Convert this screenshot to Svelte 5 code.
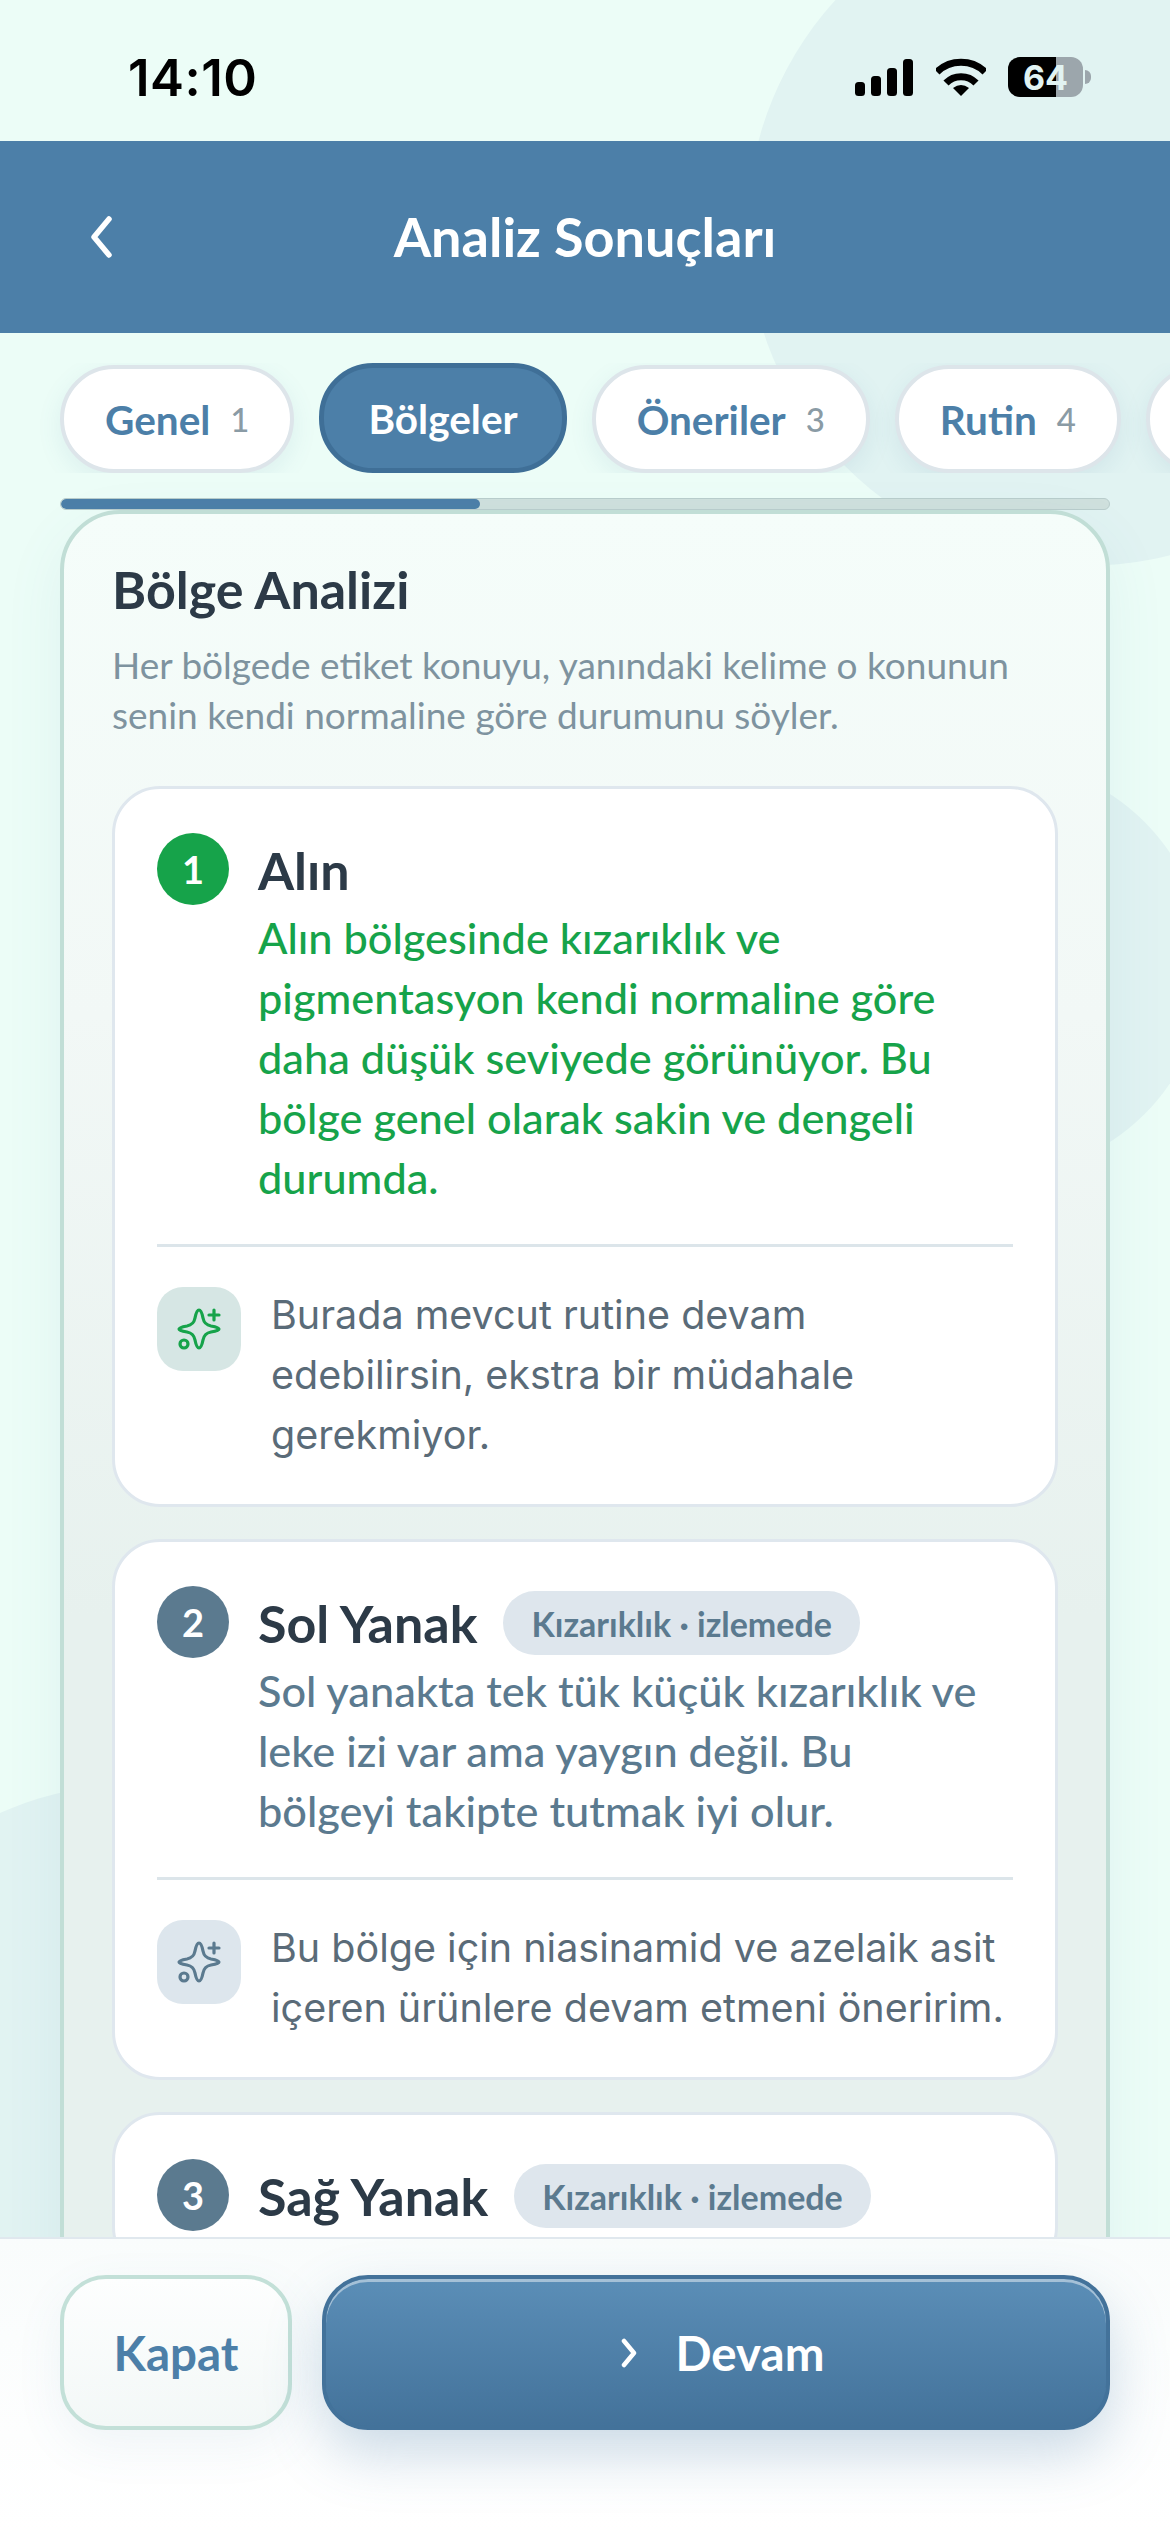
<script>
  const tabs = [
    { label: 'Genel', num: '1' },
    { label: 'Bölgeler', num: '', active: true },
    { label: 'Öneriler', num: '3' },
    { label: 'Rutin', num: '4' },
    { label: 'Ürünler', num: '5' }
  ];
  const regions = [
    {
      n: 1, name: 'Alın', tone: 'green', tag: '',
      body: 'Alın bölgesinde kızarıklık ve pigmentasyon kendi normaline göre daha düşük seviyede görünüyor. Bu bölge genel olarak sakin ve dengeli durumda.',
      advice: 'Burada mevcut rutine devam edebilirsin, ekstra bir müdahale gerekmiyor.'
    },
    {
      n: 2, name: 'Sol Yanak', tone: 'slate', tag: 'Kızarıklık · izlemede',
      body: 'Sol yanakta tek tük küçük kızarıklık ve leke izi var ama yaygın değil. Bu bölgeyi takipte tutmak iyi olur.',
      advice: 'Bu bölge için niasinamid ve azelaik asit içeren ürünlere devam etmeni öneririm.'
    },
    { n: 3, name: 'Sağ Yanak', tone: 'slate', tag: 'Kızarıklık · izlemede', body: '', advice: '' }
  ];
</script>

<div class="app">
  <div class="blob blob-a"></div>
  <div class="blob blob-b"></div>
  <div class="blob blob-c"></div>

  <div class="status">
    <span class="time">14:10</span>
    <div class="status-icons">
      <svg class="signal" width="58" height="38" viewBox="0 0 58 38" fill="#000">
        <rect x="0" y="23" width="10" height="14" rx="3.5" />
        <rect x="16" y="17" width="10" height="20" rx="3.5" />
        <rect x="32" y="9" width="10" height="28" rx="3.5" />
        <rect x="48" y="0" width="10" height="37" rx="3.5" />
      </svg>
      <svg class="wifi" width="50" height="40" viewBox="0 0 50 40" fill="none" stroke="#000" stroke-width="7">
        <path d="M1 15C14 2 36 2 49 15" />
        <path d="M10 26C18 17.500 32 17.500 40 26" />
        <path d="M17 31Q25 25 33 31L25 39Z" fill="#000" stroke="none" />
      </svg>
      <div class="battery">
        <div class="battery-body">
          <div class="battery-fill"></div>
          <span class="battery-num">64</span>
        </div>
        <div class="battery-nub"></div>
      </div>
    </div>
  </div>

  <header class="header">
    <svg class="back" width="30" height="44" viewBox="0 0 30 44" fill="none" stroke="#fff" stroke-width="5.500" stroke-linecap="round" stroke-linejoin="round">
      <path d="M24 4L9 22L24 40" />
    </svg>
    <h1>Analiz Sonuçları</h1>
  </header>

  <div class="tabs">
    {#each tabs as t}
      <div class="tab" class:active={t.active}>
        <span class="tab-label">{t.label}</span>
        {#if t.num}<span class="tab-num">{t.num}</span>{/if}
      </div>
    {/each}
  </div>

  <div class="progress"><div class="progress-fill"></div></div>

  <section class="panel">
    <h2>Bölge Analizi</h2>
    <p class="sub">Her bölgede etiket konuyu, yanındaki kelime o konunun senin kendi normaline göre durumunu söyler.</p>

    <div class="list">
      {#each regions as r}
        <article class="region {r.tone}">
          <div class="top">
            <div class="badge">{r.n}</div>
            <div class="main">
              <div class="title-row">
                <h3>{r.name}</h3>
                {#if r.tag}<span class="tag">{r.tag}</span>{/if}
              </div>
              {#if r.body}<p class="body">{r.body}</p>{/if}
            </div>
          </div>
          {#if r.advice}
            <div class="advice">
              <div class="advice-icon">
                <svg width="84" height="84" viewBox="0 0 84 84" fill="none" stroke-width="3.200" stroke-linecap="round" stroke-linejoin="round">
                  <path d="M42 23C44 23 45 26 46 31C47 36 49 38 54 39C60 40 62 41 62 42C62 43 60 44 54 45C49 46 47 48 46 53C45 58 44 61 42 61C40 61 39 58 38 53C37 48 35 46 30 45C24 44 22 43 22 42C22 41 24 40 30 39C35 38 37 36 38 31C39 26 40 23 42 23Z" />
                  <path d="M57 23V33M52 28H62" />
                  <circle cx="27" cy="57" r="4" />
                </svg>
              </div>
              <p class="advice-text">{r.advice}</p>
            </div>
          {/if}
        </article>
      {/each}
    </div>
  </section>

  <footer class="footer">
    <button class="btn-close">Kapat</button>
    <button class="btn-next">
      <svg width="18" height="30" viewBox="0 0 18 30" fill="none" stroke="#fff" stroke-width="4.500" stroke-linecap="round" stroke-linejoin="round">
        <path d="M4 3L14 15L4 27" />
      </svg>
      <span>Devam</span>
    </button>
  </footer>
</div>

<style>
  :global(body) {
    margin: 0;
    background: #ecfdf7;
  }
  .app {
    position: relative;
    width: 1170px;
    height: 2532px;
    overflow: hidden;
    background: #ecfdf7;
    font-family: Lato, "Noto Sans", sans-serif;
    color: #2c3a47;
  }
  .blob {
    position: absolute;
    border-radius: 50%;
    background: #e1f3f2;
  }
  .blob-a { left: 747px; top: -110px; width: 676px; height: 676px; }
  .blob-b { left: 791px; top: 761px; width: 414px; height: 414px; }
  .blob-c { left: -185px; top: 1785px; width: 630px; height: 630px; }

  .status {
    position: relative;
    height: 141px;
    display: flex;
    align-items: flex-start;
    justify-content: space-between;
  }
  .time {
    margin: 50px 0 0 128px;
    font-family: Inter, sans-serif;
    font-size: 51px;
    font-weight: 600;
    line-height: 56px;
    letter-spacing: 0.5px;
    color: #000;
  }
  .status-icons {
    display: flex;
    align-items: flex-start;
    margin: 57px 79px 0 0;
  }
  .signal { margin: 2px 23px 0 0; }
  .wifi { margin: 0 22px 0 0; }
  .battery {
    display: flex;
    align-items: center;
  }
  .battery-body {
    position: relative;
    width: 75px;
    height: 40px;
    border-radius: 12px;
    overflow: hidden;
    background: #9ca6ac;
    display: flex;
    align-items: center;
    justify-content: center;
  }
  .battery-fill {
    position: absolute;
    inset: 0 27px 0 0;
    background: #000;
  }
  .battery-num {
    position: relative;
    font-family: Inter, sans-serif;
    font-size: 34px;
    font-weight: 700;
    color: #e1f3f2;
  }
  .battery-nub {
    width: 6px;
    height: 14px;
    margin-left: 2px;
    border-radius: 0 6px 6px 0;
    background: #9ca6ac;
  }

  .header {
    position: relative;
    height: 192px;
    background: #4c7fa8;
    display: flex;
    align-items: center;
    justify-content: center;
  }
  .back {
    position: absolute;
    left: 85px;
    top: 74px;
  }
  h1 {
    margin: 0 0 2px;
    font-size: 54px;
    font-weight: 700;
    color: #fff;
  }

  .tabs {
    position: relative;
    margin-top: 30px;
    height: 110px;
    padding-left: 60px;
    display: flex;
    gap: 25px;
    overflow: hidden;
    align-items: flex-start;
  }
  .tab {
    flex: none;
    box-sizing: border-box;
    height: 108px;
    margin-top: 2px;
    padding: 0 41px;
    display: flex;
    align-items: center;
    gap: 20px;
    background: #fff;
    border: 4px solid #dde5ea;
    border-radius: 54px;
    box-shadow: 0 8px 24px rgba(76, 127, 168, 0.1);
  }
  .tab-label {
    font-size: 40.500px;
    font-weight: 700;
    color: #4c7fa8;
  }
  .tab-num {
    font-size: 33px;
    font-weight: 500;
    color: #8a9ba5;
  }
  .tab.active {
    height: 110px;
    margin-top: 0;
    padding: 0 44px;
    background: #4c7fa8;
    border: 5px solid #3f6f97;
    box-shadow: none;
  }
  .tab.active .tab-label { color: #fff; }

  .progress {
    position: relative;
    box-sizing: border-box;
    margin: 25px 60px 0;
    height: 12px;
    background: #cfe0dd;
    border: 1px solid #b9cdcc;
    border-radius: 6px;
    overflow: hidden;
  }
  .progress-fill {
    width: 40%;
    height: 100%;
    background: #4c7fa8;
    border-radius: 6px;
  }

  .panel {
    position: relative;
    box-sizing: border-box;
    margin: 0 60px;
    padding: 45px 48px 40px;
    background: linear-gradient(180deg, #f5fdfa 0, #f2f8f6 500px, #e7f1ee 1100px);
    border: 4px solid #c1ded6;
    border-radius: 60px;
    box-shadow: 0 20px 60px rgba(76, 127, 168, 0.08);
  }
  h2 {
    margin: 0;
    font-size: 52px;
    line-height: 60px;
    font-weight: 700;
    color: #2c3a47;
  }
  .sub {
    margin: 21px 0 0;
    max-width: 930px;
    font-size: 37px;
    line-height: 50px;
    color: #7e939f;
  }
  .list {
    margin-top: 46px;
    display: flex;
    flex-direction: column;
    gap: 32px;
  }
  .region {
    box-sizing: border-box;
    padding: 44px 42px 39px;
    background: #fff;
    border: 3px solid #dfe7ee;
    border-radius: 48px;
  }
  .top {
    display: flex;
    gap: 29px;
  }
  .badge {
    flex: none;
    width: 72px;
    height: 72px;
    border-radius: 50%;
    display: flex;
    align-items: center;
    justify-content: center;
    font-size: 38px;
    font-weight: 700;
    color: #fff;
  }
  .green .badge { background: #16a34a; }
  .slate .badge { background: #5b7a8f; }
  .main {
    flex: 1;
    min-width: 0;
  }
  .title-row {
    height: 74px;
    display: flex;
    align-items: center;
    gap: 26px;
  }
  h3 {
    margin: 0;
    font-size: 52px;
    font-weight: 700;
    color: #2c3a47;
  }
  .tag {
    height: 64px;
    padding: 0 28px;
    display: flex;
    align-items: center;
    border-radius: 32px;
    background: #dee6ed;
    font-size: 34px;
    font-weight: 700;
    color: #5b7a8f;
  }
  .body {
    margin: 0;
    max-width: 730px;
    font-size: 43.300px;
    line-height: 60px;
    font-weight: 500;
  }
  .green .body { color: #16a34a; }
  .slate .body { color: #5b7a8f; }
  .advice {
    margin-top: 37px;
    padding-top: 40px;
    border-top: 3px solid #dce5ea;
    display: flex;
    gap: 30px;
  }
  .advice-icon {
    flex: none;
    width: 84px;
    height: 84px;
    border-radius: 26px;
  }
  .advice-icon svg { display: block; }
  .green .advice-icon { background: #d6e6e4; }
  .green .advice-icon svg { stroke: #16a34a; }
  .slate .advice-icon { background: #dde6ed; }
  .slate .advice-icon svg { stroke: #5b7a8f; }
  .advice-text {
    margin: -2px 0 0;
    max-width: 740px;
    font-family: Inter, sans-serif;
    font-size: 39.500px;
    line-height: 60px;
    color: #5a6b78;
  }

  .footer {
    position: absolute;
    left: 0;
    right: 0;
    bottom: 0;
    height: 295px;
    box-sizing: border-box;
    padding: 36px 60px 0;
    display: flex;
    align-items: flex-start;
    gap: 30px;
    background: linear-gradient(180deg, #f9fcfc 0, #ffffff 100%);
    border-top: 2px solid #e0e8ee;
  }
  button {
    box-sizing: border-box;
    height: 155px;
    border-radius: 46px;
    font-family: inherit;
    font-size: 47.500px;
    font-weight: 700;
    padding: 0;
  }
  .btn-close {
    flex: none;
    width: 232px;
    background: linear-gradient(180deg, #fdfefe 0, #f3f8f7 100%);
    border: 4px solid #c3e0d8;
    color: #4c7fa8;
    box-shadow: 0 16px 48px rgba(76, 127, 168, 0.08);
  }
  .btn-next {
    flex: 1;
    padding-left: 12px;
    display: flex;
    align-items: center;
    justify-content: center;
    gap: 38px;
    color: #fff;
    background: linear-gradient(180deg, #5b8eb7 0, #43729a 100%);
    border: 4px solid #43729a;
    box-shadow: inset 0 3px 0 rgba(255, 255, 255, 0.45), 0 24px 56px rgba(76, 127, 168, 0.28);
  }
</style>
